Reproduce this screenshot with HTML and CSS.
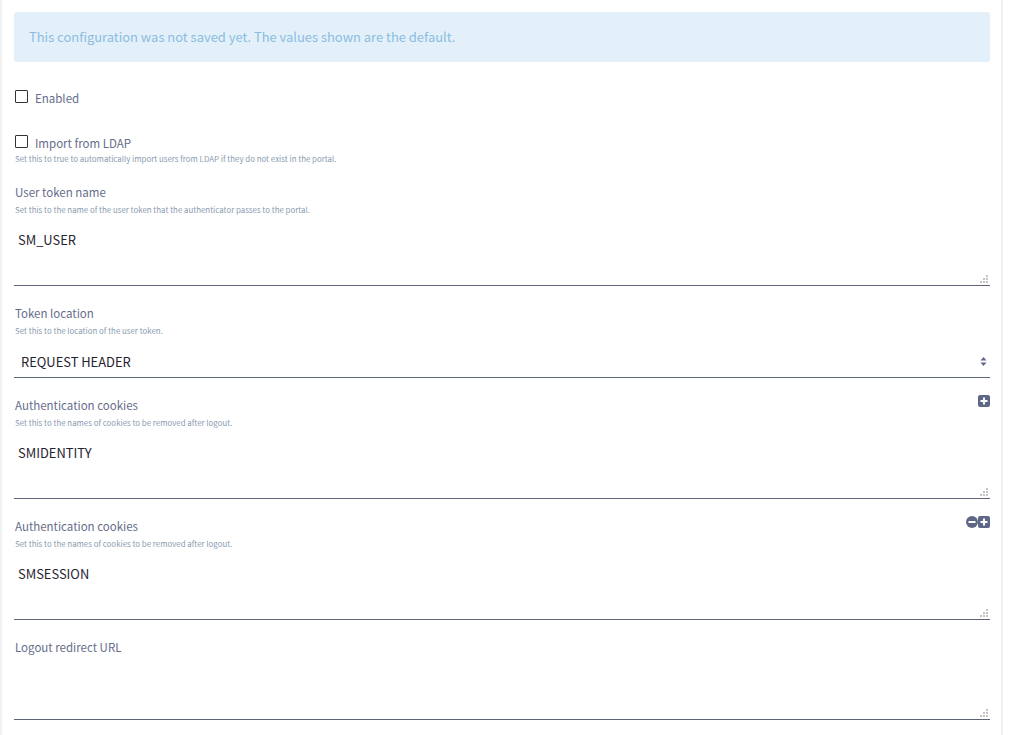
FILE: index.html
```html
<!DOCTYPE html>
<html lang="en">
<head>
<meta charset="utf-8">
<title>Configuration</title>
<link rel="stylesheet" href="styles.css">
</head>
<body>
<main class="panel">
  <div class="alert">This configuration was not saved yet. The values shown are the default.</div>

  <div class="check-row check-enabled">
    <input class="check" type="checkbox" id="enabled">
    <label class="label" for="enabled">Enabled</label>
  </div>

  <div class="check-row check-ldap">
    <input class="check" type="checkbox" id="ldap">
    <label class="label" for="ldap">Import from LDAP</label>
  </div>
  <div class="help help-check">Set this to true to automatically import users from LDAP if they do not exist in the portal.</div>

  <div class="field field-first">
    <label class="label" for="token">User token name</label>
    <div class="help">Set this to the name of the user token that the authenticator passes to the portal.</div>
    <div class="area-wrap">
      <textarea class="area" id="token">SM_USER</textarea>
      <svg class="grip" width="8" height="8" viewBox="0 0 8 8"><path d="M6 0h2v2H6zM3 3h2v2H3zM6 3h2v2H6zM0 6h2v2H0zM3 6h2v2H3zM6 6h2v2H6z"/></svg>
    </div>
  </div>

  <div class="field">
    <label class="label" for="loc">Token location</label>
    <div class="help">Set this to the location of the user token.</div>
    <div class="select-wrap">
      <select class="select" id="loc"><option>REQUEST HEADER</option></select>
      <svg class="sort" width="7" height="11" viewBox="0 0 7 11"><path d="M3.500 1 6.500 4.400H.5zM3.500 10 .5 6.600h6z"/></svg>
    </div>
  </div>

  <div class="field">
    <div class="label-row">
      <label class="label" for="c1">Authentication cookies</label>
      <div class="actions">
        <svg class="act" width="12" height="12" viewBox="0 0 12 12"><rect width="12" height="12" rx="2"/><path class="glyph" d="M2.500 6h7M6 2.500v7"/></svg>
      </div>
    </div>
    <div class="help">Set this to the names of cookies to be removed after logout.</div>
    <div class="area-wrap">
      <textarea class="area" id="c1">SMIDENTITY</textarea>
      <svg class="grip" width="8" height="8" viewBox="0 0 8 8"><path d="M6 0h2v2H6zM3 3h2v2H3zM6 3h2v2H6zM0 6h2v2H0zM3 6h2v2H3zM6 6h2v2H6z"/></svg>
    </div>
  </div>

  <div class="field">
    <div class="label-row">
      <label class="label" for="c2">Authentication cookies</label>
      <div class="actions">
        <svg class="act" width="12" height="12" viewBox="0 0 12 12"><circle cx="6" cy="6" r="6"/><path class="glyph" d="M2.500 6h7"/></svg>
        <svg class="act" width="12" height="12" viewBox="0 0 12 12"><rect width="12" height="12" rx="2"/><path class="glyph" d="M2.500 6h7M6 2.500v7"/></svg>
      </div>
    </div>
    <div class="help">Set this to the names of cookies to be removed after logout.</div>
    <div class="area-wrap">
      <textarea class="area" id="c2">SMSESSION</textarea>
      <svg class="grip" width="8" height="8" viewBox="0 0 8 8"><path d="M6 0h2v2H6zM3 3h2v2H3zM6 3h2v2H6zM0 6h2v2H0zM3 6h2v2H3zM6 6h2v2H6z"/></svg>
    </div>
  </div>

  <div class="field">
    <label class="label" for="url">Logout redirect URL</label>
    <div class="area-wrap area-nohelp">
      <textarea class="area" id="url"></textarea>
      <svg class="grip" width="8" height="8" viewBox="0 0 8 8"><path d="M6 0h2v2H6zM3 3h2v2H3zM6 3h2v2H6zM0 6h2v2H0zM3 6h2v2H3zM6 6h2v2H6z"/></svg>
    </div>
  </div>
</main>
</body>
</html>
```
FILE: styles.css
```css
* { box-sizing: border-box; }
html, body { margin: 0; height: 100%; overflow: hidden; background: #fff; }
body { font-family: "Noto Sans CJK SC", "Noto Sans", sans-serif; }

.panel {
  width: 1003px;
  height: 735px;
  padding: 12px 11px 0 12px;
  border-left: 2px solid #f1f1f1;
  border-right: 2px solid #f1f1f1;
  overflow: hidden;
}

.alert {
  height: 50px;
  line-height: 50px;
  padding-left: 15px;
  background: #e3f0fa;
  border-radius: 3px;
  color: #8abde0;
  font-size: 12.95px;
}

.label {
  display: block;
  height: 20px;
  line-height: 20px;
  padding-left: 1px;
  font-size: 11.5px;
  color: #666d8a;
}

.help {
  height: 14px;
  line-height: 14px;
  margin-top: 1px;
  padding-left: 1px;
  font-size: 7.88px;
  color: #8a9bb0;
}

.check-row { display: flex; align-items: center; height: 20px; }
.check-row .label { padding-left: 0; }
.check-enabled { margin-top: 26px; }
.check-ldap { margin-top: 25px; }
.help-check { margin-top: -1px; }

.check {
  appearance: none;
  width: 13px;
  height: 13px;
  margin: -3px 7px 0 1px;
  border: 1px solid #333;
  border-radius: 1px;
  background: #fff;
}

.field { margin-top: 17px; }
.field-first { margin-top: 16px; }

.label-row { display: flex; justify-content: space-between; align-items: flex-start; height: 20px; }
.actions { display: flex; }
.act { fill: #5f6789; display: block; }
.glyph { fill: none; stroke: #fff; stroke-width: 2; }

.area-wrap { position: relative; margin-top: 7px; }
.area-nohelp { margin-top: 1px; }

.area {
  display: block;
  width: 100%;
  height: 62px;
  padding: 6px 4px;
  border: 0;
  border-bottom: 1px solid #5f6578;
  border-radius: 0;
  outline: 0;
  resize: none;
  background: #fff;
  font: 12.9px/20px "Noto Sans CJK SC", "Noto Sans", sans-serif;
  color: #1f2430;
}

.grip { position: absolute; right: 2px; bottom: 3px; fill: #c4c4c4; }

.select-wrap { position: relative; margin-top: 7px; }
.select {
  appearance: none;
  display: block;
  width: 100%;
  height: 33px;
  padding: 0 7px;
  border: 0;
  border-bottom: 1px solid #5f6578;
  border-radius: 0;
  outline: 0;
  background: #fff;
  font: 12.9px "Noto Sans CJK SC", "Noto Sans", sans-serif;
  color: #1f2430;
}
.sort { position: absolute; right: 3px; top: 11px; fill: #5f6789; }
```
